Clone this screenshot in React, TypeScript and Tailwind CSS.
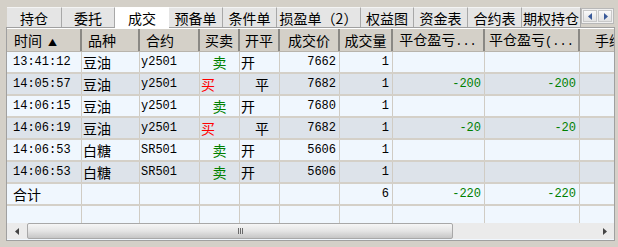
import React from 'react';

const cn = "font-['Noto_Sans_CJK_SC',sans-serif] text-[14px] leading-none";
const num = "font-['Liberation_Mono','Noto_Sans_CJK_SC',monospace] text-[12px] leading-none";

const cols: { key: string; title: React.ReactNode; w: number; head: string }[] = [
  { key: 'time', title: <>时间<span className="text-[9px] ml-[6px]">▲</span></>, w: 75, head: 'justify-start pl-[7px]' },
  { key: 'kind', title: '品种', w: 58, head: 'justify-start pl-[6px]' },
  { key: 'code', title: '合约', w: 60, head: 'justify-start pl-[6px]' },
  { key: 'bs', title: '买卖', w: 40, head: 'justify-center' },
  { key: 'oc', title: '开平', w: 40, head: 'justify-center' },
  { key: 'price', title: '成交价', w: 60, head: 'justify-center' },
  { key: 'vol', title: '成交量', w: 53, head: 'justify-center' },
  { key: 'pl1', title: <>平仓盈亏<span className={num}>...</span></>, w: 92, head: 'justify-center' },
  { key: 'pl2', title: <>平仓盈亏<span className={num}>(...</span></>, w: 95, head: 'justify-center' },
  { key: 'fee', title: '手续费', w: 74, head: 'justify-center' },
];

const rows = [
  ['13:41:12', '豆油', 'y2501', '卖', '开', '7662', '1', '', '', '2.40'],
  ['14:05:57', '豆油', 'y2501', '买', '平', '7682', '1', '-200', '-200', '2.40'],
  ['14:06:15', '豆油', 'y2501', '卖', '开', '7680', '1', '', '', '2.40'],
  ['14:06:19', '豆油', 'y2501', '买', '平', '7682', '1', '-20', '-20', '2.40'],
  ['14:06:53', '白糖', 'SR501', '卖', '开', '5606', '1', '', '', '3.76'],
  ['14:06:53', '白糖', 'SR501', '卖', '开', '5606', '1', '', '', '3.76'],
];

const tabs = ['持仓', '委托', '成交', '预备单', '条件单', '损盈单（2）', '权益图', '资金表', '合约表', '期权持仓'];
const tabW = [55, 53, 54, 54, 54, 84, 53, 54, 54, 59];

function Cell({ i, v, last }: { i: number; v: string; last?: boolean }) {
  const w = cols[i].w;
  let cls = '';
  if (i === 0) cls = `${last ? cn : num} pl-[6px] justify-start`;
  else if (i === 1) cls = `${cn} pl-[1px] justify-start`;
  else if (i === 2) cls = `${num} pl-[1px] justify-start`;
  else if (i === 3) {
    cls = `${cn} ${v === '买' ? 'justify-start pl-[1px] text-[#ff0000]' : 'justify-center text-[#008000]'}`;
  } else if (i === 4) cls = `${cn} justify-start ${v === '平' ? 'pl-[15px]' : 'pl-[1px]'}`;
  else cls = `${num} justify-end pr-[3px] ${i === 7 || i === 8 ? 'text-[#008000]' : ''}`;
  return (
    <div
      className={`flex items-center h-full shrink-0 border-r border-[#d0ccc4] ${cls}`}
      style={{ width: w }}
    >
      {v}
    </div>
  );
}

export default function App() {
  return (
    <div className="w-[618px] h-[247px] bg-[#d4d0c8] overflow-hidden relative">
      {/* tab strip */}
      <div className="flex h-[27px] pt-[7px] pl-[7px]">
        {tabs.map((t, i) => (
          <div
            key={t}
            className={`flex items-center justify-center h-[20px] shrink-0 ${cn} ${
              i === 2
                ? 'bg-white h-[21px] relative z-10'
                : 'bg-[#e5e5e5] border-r border-[#a8a8a8] border-t border-t-[#f4f4f4]'
            }`}
            style={{ width: tabW[i] }}
          >
            {t}
          </div>
        ))}
        <div className="flex mt-[1px] gap-[1px] h-[16px] border border-[#b8b8b8] bg-[#f0f0f0] p-[1px]">
          <div className="w-[14px] h-full bg-gradient-to-b from-[#fafafa] to-[#e2e2e2] border border-[#c8c8c8] flex items-center justify-center">
            <svg width="5" height="7" viewBox="0 0 5 7"><path d="M4 0 L0 3.5 L4 7 Z" fill="#3a5a99" /></svg>
          </div>
          <div className="w-[14px] h-full bg-gradient-to-b from-[#fafafa] to-[#e2e2e2] border border-[#c8c8c8] flex items-center justify-center">
            <svg width="5" height="7" viewBox="0 0 5 7"><path d="M1 0 L5 3.5 L1 7 Z" fill="#3a5a99" /></svg>
          </div>
        </div>
      </div>

      {/* panel */}
      <div className="ml-[6px] w-[609px] h-[214px] border border-[#a0a0a0] bg-[#f0f7fe] flex flex-col overflow-hidden">
        <div className="flex-1 overflow-hidden">
          <div className="flex h-[24px] bg-[#d4d0c8] border-b border-[#b8b4ac] border-t border-t-white">
            {cols.map((c) => (
              <div
                key={c.key}
                className={`flex items-center shrink-0 h-full border-r-2 border-r-[#8a8884] ${cn} ${c.head}`}
                style={{ width: c.w }}
              >
                <span>{c.title}</span>
              </div>
            ))}
          </div>
          {rows.map((r, ri) => (
            <div
              key={ri}
              className={`flex h-[22px] border-b-2 border-[#d4d0c8] ${ri % 2 === 1 ? 'bg-[#dde3ea]' : 'bg-[#f0f7fe]'}`}
            >
              {r.map((v, i) => (
                <Cell key={i} i={i} v={v} />
              ))}
            </div>
          ))}
          <div className="flex h-[22px] border-b-2 border-[#d4d0c8] bg-[#f0f7fe]">
            {['合计', '', '', '', '', '', '6', '-220', '-220', '17.12'].map((v, i) => (
              <Cell key={i} i={i} v={v} last />
            ))}
          </div>
          <div className="flex h-[18px] bg-[#f0f7fe]">
            {cols.map((c, i) => (
              <Cell key={c.key} i={i} v="" />
            ))}
          </div>
        </div>

        {/* horizontal scrollbar */}
        <div className="flex h-[16px] bg-[#ebebeb] shrink-0 mb-[1px]">
          <div className="w-[20px] flex items-center justify-center">
            <svg width="4" height="7" viewBox="0 0 4 7"><path d="M4 0 L0 3.5 L4 7 Z" fill="#444" /></svg>
          </div>
          <div className="w-[426px] h-full rounded-[2px] border border-[#a8a8a8] bg-gradient-to-b from-[#f6f6f6] via-[#e4e4e4] to-[#c6c6c6] flex items-center justify-center">
            <div className="flex gap-[1px]">
              <div className="w-[1px] h-[6px] bg-[#6a6a6a]" />
              <div className="w-[1px] h-[6px] bg-[#6a6a6a]" />
              <div className="w-[1px] h-[6px] bg-[#6a6a6a]" />
            </div>
          </div>
          <div className="flex-1" />
          <div className="w-[18px] flex items-center justify-center">
            <svg width="4" height="7" viewBox="0 0 4 7"><path d="M0 0 L4 3.5 L0 7 Z" fill="#444" /></svg>
          </div>
        </div>
      </div>
    </div>
  );
}
